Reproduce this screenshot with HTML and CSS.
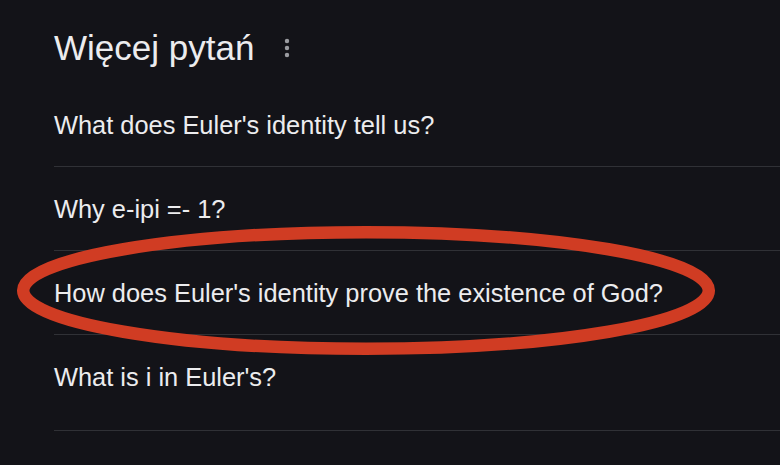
FILE: index.html
```html
<!DOCTYPE html>
<html lang="pl">
<head>
<meta charset="utf-8">
<title>Więcej pytań</title>
<link rel="stylesheet" href="styles.css">
</head>
<body>
<div class="page">
  <section class="panel">
    <div class="header">
      <h2 class="title">Więcej pytań</h2>
      <svg class="more" viewBox="0 0 24 24" aria-hidden="true">
        <circle cx="12" cy="6" r="1.9"/>
        <circle cx="12" cy="12" r="1.9"/>
        <circle cx="12" cy="18" r="1.9"/>
      </svg>
    </div>
    <ul class="list">
      <li class="item">What does Euler's identity tell us?</li>
      <li class="item">Why e-ipi =- 1?</li>
      <li class="item">How does Euler's identity prove the existence of God?</li>
      <li class="item item-last">What is i in Euler's?</li>
    </ul>
  </section>
  <svg class="mark" viewBox="0 0 780 465" aria-hidden="true">
    <ellipse cx="366" cy="290.5" rx="342.8" ry="58.3"/>
  </svg>
</div>
</body>
</html>
```
FILE: styles.css
```css
html, body {
  margin: 0;
  padding: 0;
  background: #131318;
}
body {
  width: 780px;
  height: 465px;
  overflow: hidden;
  font-family: "Liberation Sans", Arial, sans-serif;
  color: #ececee;
}
.page {
  position: relative;
  width: 780px;
  height: 465px;
}
.panel {
  padding: 28px 0 0 54px;
}
.header {
  display: flex;
  align-items: center;
  height: 40px;
}
.title {
  margin: 0;
  font-size: 35px;
  line-height: 40px;
  font-weight: 400;
  color: #ececee;
}
.more {
  width: 28px;
  height: 28px;
  margin-left: 19px;
  fill: #9b9ca1;
}
.list {
  list-style: none;
  margin: 15px 0 0;
  padding: 0;
}
.item {
  padding: 27px 0 26px;
  font-size: 25.4px;
  line-height: 30px;
  border-bottom: 1px solid #303136;
  white-space: nowrap;
}
.item-last {
  padding-bottom: 38px;
}
.mark {
  position: absolute;
  left: 0;
  top: 0;
  width: 780px;
  height: 465px;
  pointer-events: none;
}
.mark ellipse {
  fill: none;
  stroke: #d03c23;
  stroke-width: 12.5;
}
```
